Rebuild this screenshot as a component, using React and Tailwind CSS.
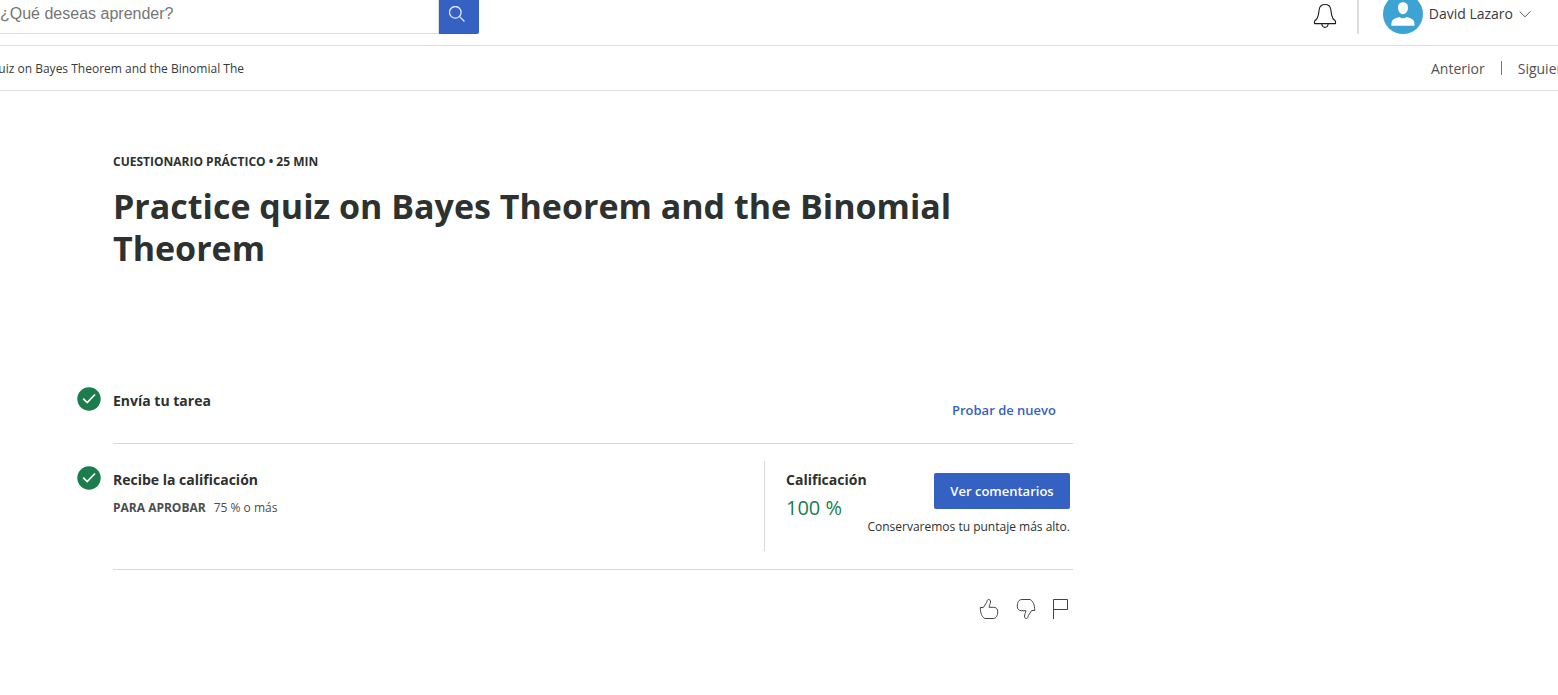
import React from "react";

function SearchIcon() {
  return (
    <svg width="16" height="16" viewBox="0 0 16 16" fill="none" stroke="#dfe6f6" strokeWidth="1.3" aria-hidden="true">
      <circle cx="6.3" cy="6.3" r="5.8" />
      <path d="M10.4 10.4 15.5 15.5" />
    </svg>
  );
}

function BellIcon() {
  return (
    <svg width="24" height="26" viewBox="0 0 24 26" fill="none" stroke="#1f1f1f" strokeWidth="1.1" strokeLinejoin="round" aria-hidden="true">
      <path d="M1.5 20.6v-2.4c2-1.6 3.500-3.600 3.900-6.400l.8-5.300C6.700 3.100 9 1.500 12 1.500s5.300 1.600 5.800 5l.8 5.300c.4 2.800 1.900 4.800 3.900 6.400v2.400z" />
      <path d="M8.800 20.800c.2 2.300 1.400 3.600 3.200 3.600s3-1.300 3.200-3.600" />
    </svg>
  );
}

function Avatar() {
  return (
    <svg width="40" height="40" viewBox="0 0 40 40" aria-hidden="true">
      <circle cx="20" cy="20" r="20" fill="#3ca3d4" />
      <path d="M20 8.300c3.200 0 5 2.100 5 5.300 0 3.300-1.700 6.700-5 6.700s-5-3.400-5-6.700c0-3.200 1.800-5.300 5-5.300z" fill="#fff" />
      <path d="M8.300 31.800c0-3.800.6-5.800 2.800-6.900 1.700-.8 3.400-1.300 5.400-1.900 1.800 1.700 5.200 1.700 7 0 2 .6 3.700 1.100 5.400 1.900 2.200 1.100 2.600 3.100 2.600 6.900z" fill="#fff" />
    </svg>
  );
}

function CheckBadge() {
  return (
    <svg width="24" height="24" viewBox="0 0 24 24" aria-hidden="true">
      <circle cx="12" cy="12" r="11.700" fill="#1b7c4c" />
      <path d="M6.200 11.600 10.200 15.500 18 7.500" fill="none" stroke="#fff" strokeWidth="1.700" />
    </svg>
  );
}

function ThumbIcon({ down = false }) {
  return (
    <svg width="20" height="22" viewBox="0 0 20 22" fill="none" stroke="#3f4347" strokeWidth="1" strokeLinejoin="round" aria-hidden="true">
      <path
        transform={down ? "rotate(180 10 11)" : undefined}
        d="M1.300 9.500H4.300C5.200 7.500 7 6.300 7.700 4.300 8.100 3 8.200 1.500 9.600 1.500c1.500 0 1.900 1.100 1.900 2.500 0 1.800-1.300 3-1.300 5.300h4.500c2.600 0 4 1.800 4 4.300 0 4.500-1.800 6.900-4.500 6.900H5.800C2.900 18.600 1.300 15.200 1.300 9.500z"
      />
    </svg>
  );
}

function FlagIcon() {
  return (
    <svg width="16" height="22" viewBox="0 0 16 22" fill="none" stroke="#3f4347" strokeWidth="1" aria-hidden="true">
      <path d="M.5 21V1.500h14v10H.5" />
    </svg>
  );
}

function TopBar() {
  return (
    <header className="flex h-[46px] items-start justify-between border-b border-[#dcdcdc]">
      <form role="search" className="flex h-[34px]" onSubmit={(e) => e.preventDefault()}>
        <input
          type="text"
          aria-label="Buscar"
          placeholder="¿Qué deseas aprender?"
          className="w-[439px] border-r border-b border-[#dcdcdc] pb-1.5 font-['Liberation_Sans',sans-serif] text-[16px] text-[#333] outline-none placeholder:text-[#757575]"
        />
        <button type="submit" aria-label="Buscar" className="flex w-10 justify-center rounded-br-[2px] bg-[#3561c3] pt-1.5 pr-1">
          <SearchIcon />
        </button>
      </form>
      <div className="flex h-[34px] items-end pr-[27px]">
        <button type="button" aria-label="Notificaciones" className="mr-5 pb-[5px]">
          <BellIcon />
        </button>
        <div className="h-[34px] w-0.5 bg-[#dcdcdc]" />
        <button type="button" className="ml-6 flex h-10 items-center gap-1.5 text-[14px] text-[#373a3c]">
          <Avatar />
          <span className="pb-0.5">David Lazaro</span>
          <svg width="12" height="8" viewBox="0 0 12 8" fill="none" stroke="#555" aria-hidden="true">
            <path d="M.7 1.500 6 6.800 11.300 1.500" />
          </svg>
        </button>
      </div>
    </header>
  );
}

function LessonBar() {
  return (
    <nav aria-label="Lección" className="flex h-[45px] items-center justify-between border-b border-[#dcdcdc]">
      <div className="flex w-61 justify-end overflow-hidden pt-0.5 text-[12px] whitespace-nowrap text-[#373a3c]">
        <span>quiz on Bayes Theorem and the Binomial The</span>
      </div>
      <div className="flex w-[127px] items-center gap-4 text-[14px] whitespace-nowrap text-[#525252]">
        <a href="#anterior">Anterior</a>
        <span className="h-3.5 w-px shrink-0 bg-[#757575]" />
        <a href="#siguiente">Siguiente</a>
      </div>
    </nav>
  );
}

export default function App() {
  return (
    <div className="overflow-x-hidden bg-white font-['Open_Sans',sans-serif] text-[#2d312f]">
      <TopBar />
      <LessonBar />
      <main className="max-w-[1073px] pt-[62px] pl-[113px]">
        <p className="text-[12px] leading-[18px] font-bold">CUESTIONARIO PRÁCTICO • 25 MIN</p>
        <h1 className="mt-3.5 text-[34px] leading-[42px] font-bold">
          Practice quiz on Bayes Theorem and the Binomial Theorem
        </h1>

        <section className="mt-[118px] -ml-9">
          <div className="flex h-[57px] gap-3">
            <CheckBadge />
            <div className="flex flex-1 items-start justify-between border-b border-[#d9d9d9] pr-[17px]">
              <h2 className="pt-1 text-[14px] leading-5 font-bold">Envía tu tarea</h2>
              <a href="#probar" className="pt-[13px] text-[13px] leading-5 font-semibold text-[#3561c3]">
                Probar de nuevo
              </a>
            </div>
          </div>

          <div className="flex gap-3">
            <div className="pt-[22px]">
              <CheckBadge />
            </div>
            <div className="flex flex-1 justify-between border-b border-[#d9d9d9] pt-[17px] pb-[18px]">
              <div className="pt-[9px]">
                <h2 className="text-[14px] leading-5 font-bold">Recibe la calificación</h2>
                <p className="mt-2 text-[12px] leading-5 text-[#4a4d4f]">
                  <strong className="mr-2 font-bold">PARA APROBAR</strong>75 % o más
                </p>
              </div>
              <div className="flex h-[90px] w-[309px] justify-between border-l border-[#d9d9d9] pr-[3px] pl-[21px]">
                <div className="pt-[9px]">
                  <h3 className="text-[14px] leading-5 font-bold">Calificación</h3>
                  <p className="mt-1 text-[20px] leading-7 text-[#1b7c4c]">100 %</p>
                </div>
                <div className="-ml-6 flex flex-col items-end pt-3">
                  <button type="button" className="h-9 w-[136px] rounded-[2px] bg-[#3561c3] pt-0.5 text-[13px] font-semibold text-white">
                    Ver comentarios
                  </button>
                  <p className="mt-2 text-[12px] leading-5 whitespace-nowrap">Conservaremos tu puntaje más alto.</p>
                </div>
              </div>
            </div>
          </div>
        </section>

        <div className="flex justify-end gap-[17px] pt-7 pr-1 pb-12">
          <button type="button" aria-label="Me gusta"><ThumbIcon /></button>
          <button type="button" aria-label="No me gusta"><ThumbIcon down /></button>
          <button type="button" aria-label="Informar de un problema"><FlagIcon /></button>
        </div>
      </main>
    </div>
  );
}
